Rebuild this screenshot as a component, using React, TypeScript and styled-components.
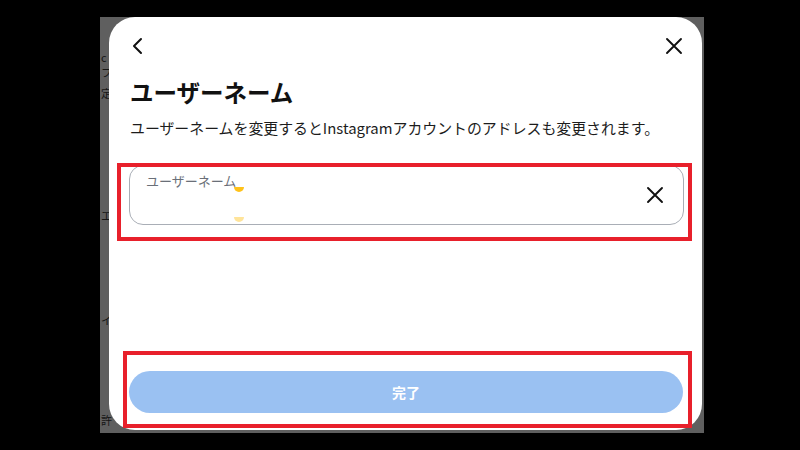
import React from 'react';
import styled, { createGlobalStyle } from 'styled-components';

const GlobalStyle = createGlobalStyle`
  html, body {
    margin: 0;
    padding: 0;
    background: #000;
  }

  body {
    font-family: "Noto Sans CJK JP", "Noto Sans", sans-serif;
  }
`;

const Stage = styled.div`
  width: 800px;
  height: 450px;
  box-sizing: border-box;
  padding: 17px 96px 17px 100px;
  background: #000;
`;

const Screen = styled.div`
  position: relative;
  width: 604px;
  height: 416px;
  background: #5f5f5f;
  overflow: hidden;
`;

const BehindPage = styled.div`
  display: flex;
  flex-direction: column;
  padding-left: 1px;
`;

const BehindLine = styled.div<{ $top: number }>`
  margin-top: ${(p) => p.$top}px;
  font-size: 11px;
  line-height: 12px;
  color: #151515;
  white-space: nowrap;
`;

const Modal = styled.div`
  position: absolute;
  top: 0;
  left: 9px;
  right: 2px;
  bottom: 3px;
  background: #fff;
  border-radius: 26px;
  display: flex;
  flex-direction: column;
  box-sizing: border-box;
  padding: 20px 19px 17px 20px;
`;

const Header = styled.div`
  display: flex;
  align-items: center;
  justify-content: space-between;
  height: 18px;
`;

const IconButton = styled.button`
  display: flex;
  align-items: center;
  justify-content: center;
  width: 18px;
  height: 18px;
  padding: 0;
  border: none;
  background: none;
  cursor: pointer;
`;

const Title = styled.h1`
  margin: 22px 0 0 1px;
  font-size: 23.5px;
  line-height: 30px;
  font-weight: 700;
  color: #111;
`;

const Description = styled.p`
  margin: 11px 0 0 1px;
  font-size: 14.9px;
  line-height: 20px;
  color: #1c1c1c;
  white-space: nowrap;
`;

const Field = styled.div`
  position: relative;
  margin-top: 27px;
  width: 555px;
  height: 60px;
  box-sizing: border-box;
  border: 1px solid #a9aeb6;
  border-radius: 14px;
  display: flex;
  align-items: center;
  justify-content: flex-end;
  padding: 0 19px 0 16px;
`;

const FieldLabel = styled.span`
  position: absolute;
  top: 5px;
  left: 16px;
  font-size: 13px;
  color: #6a6f78;
`;

const Handle = styled.span<{ $top: number; $color: string }>`
  position: absolute;
  left: 104px;
  top: ${(p) => p.$top}px;
  width: 10px;
  height: 5px;
  border-radius: 0 0 5px 5px;
  background: ${(p) => p.$color};
`;

const Spacer = styled.div`
  flex: 1;
`;

const DoneButton = styled.button`
  width: 554px;
  height: 42px;
  border: none;
  border-radius: 21px;
  background: #9ac1f2;
  color: #fff;
  font-family: inherit;
  font-size: 14px;
  font-weight: 700;
  cursor: pointer;
`;

const Highlight = styled.div<{ $top: number; $left: number; $width: number; $height: number }>`
  position: absolute;
  top: ${(p) => p.$top}px;
  left: ${(p) => p.$left}px;
  width: ${(p) => p.$width}px;
  height: ${(p) => p.$height}px;
  box-sizing: border-box;
  border: 4px solid #e8202b;
  pointer-events: none;
`;

const ChevronLeft = () => (
  <svg width="18" height="18" viewBox="0 0 18 18" fill="none">
    <path d="M12 2 L5 9 L12 16" stroke="#111" strokeWidth="2" strokeLinecap="round" strokeLinejoin="round" />
  </svg>
);

const CloseIcon = ({ size }: { size: number }) => (
  <svg width={size} height={size} viewBox="0 0 18 18" fill="none">
    <path d="M2 2 L16 16 M16 2 L2 16" stroke="#111" strokeWidth="1.9" strokeLinecap="round" />
  </svg>
);

const behindLines = [
  { text: 'c', top: 34 },
  { text: 'フ', top: 3 },
  { text: '定', top: 9 },
  { text: 'エ', top: 110 },
  { text: 'イ', top: 93 },
  { text: '許', top: 88 },
];

const App = () => {
  return (
    <>
      <GlobalStyle />
      <Stage>
        <Screen>
          <BehindPage>
            {behindLines.map((line) => (
              <BehindLine key={line.text} $top={line.top}>
                {line.text}
              </BehindLine>
            ))}
          </BehindPage>
          <Modal>
            <Header>
              <IconButton aria-label="戻る">
                <ChevronLeft />
              </IconButton>
              <IconButton aria-label="閉じる">
                <CloseIcon size={18} />
              </IconButton>
            </Header>
            <Title>ユーザーネーム</Title>
            <Description>
              ユーザーネームを変更するとInstagramアカウントのアドレスも変更されます。
            </Description>
            <Field>
              <FieldLabel>ユーザーネーム</FieldLabel>
              <Handle $top={21} $color="#ffc21a" />
              <Handle $top={51} $color="#ffe49a" />
              <IconButton aria-label="クリア">
                <CloseIcon size={18} />
              </IconButton>
            </Field>
            <Spacer />
            <DoneButton>完了</DoneButton>
            <Highlight $top={146} $left={8} $width={575} $height={78} />
            <Highlight $top={334} $left={14} $width={569} $height={77} />
          </Modal>
        </Screen>
      </Stage>
    </>
  );
};

export default App;
